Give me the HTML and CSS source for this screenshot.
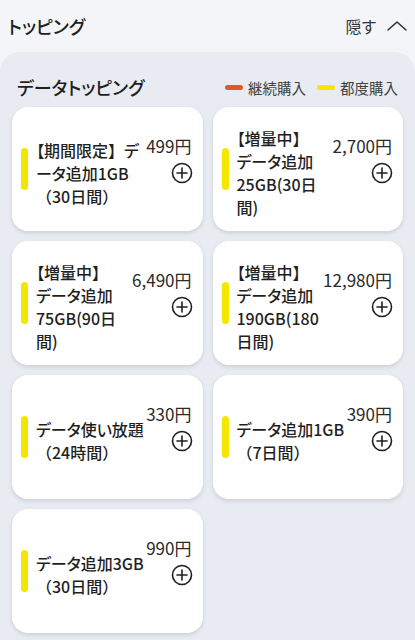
FILE: index.html
```html
<!DOCTYPE html>
<html lang="ja">

<head>
    <meta charset="utf-8" />
    <meta name="viewport" content="width=device-width, initial-scale=1" />
    <title>トッピング</title>
    <link rel="stylesheet" href="styles.css">
</head>

<body>
    <header class="top">
        <h1 class="top-title">トッピング</h1>
        <button class="toggle">
            隠す
            <svg width="22" height="12" viewBox="0 0 22 12" fill="none" stroke="currentColor" stroke-width="1.6"
                stroke-linecap="round" stroke-linejoin="round">
                <polyline points="2 10 11 2 20 10" />
            </svg>
        </button>
    </header>

    <section class="panel">
        <div class="panel-head">
            <h2 class="panel-title">データトッピング</h2>
            <ul class="legend">
                <li><span class="swatch swatch-cont"></span>継続購入</li>
                <li><span class="swatch swatch-once"></span>都度購入</li>
            </ul>
        </div>

        <div class="grid">
            <div class="card">
                <span class="bar"></span>
                <p class="name">【期間限定<span class="fw">】</span>デ<br />ータ追加1GB<br /><span class="fw">（30日間）</span></p>
                <div class="side">
                    <span class="price">499円</span>
                    <svg class="add" width="22" height="22" viewBox="0 0 22 22" fill="none" stroke="currentColor" stroke-width="1.6" stroke-linecap="round">
                        <circle cx="11" cy="11" r="9.5" />
                        <line x1="11" y1="6" x2="11" y2="16" />
                        <line x1="6" y1="11" x2="16" y2="11" />
                    </svg>
                </div>
            </div>

            <div class="card">
                <span class="bar"></span>
                <p class="name">【増量中<span class="fw">】</span><br />データ追加<br />25GB(30日<br />間)</p>
                <div class="side">
                    <span class="price">2,700円</span>
                    <svg class="add" width="22" height="22" viewBox="0 0 22 22" fill="none" stroke="currentColor" stroke-width="1.6" stroke-linecap="round">
                        <circle cx="11" cy="11" r="9.5" />
                        <line x1="11" y1="6" x2="11" y2="16" />
                        <line x1="6" y1="11" x2="16" y2="11" />
                    </svg>
                </div>
            </div>

            <div class="card">
                <span class="bar"></span>
                <p class="name">【増量中<span class="fw">】</span><br />データ追加<br />75GB(90日<br />間)</p>
                <div class="side">
                    <span class="price">6,490円</span>
                    <svg class="add" width="22" height="22" viewBox="0 0 22 22" fill="none" stroke="currentColor" stroke-width="1.6" stroke-linecap="round">
                        <circle cx="11" cy="11" r="9.5" />
                        <line x1="11" y1="6" x2="11" y2="16" />
                        <line x1="6" y1="11" x2="16" y2="11" />
                    </svg>
                </div>
            </div>

            <div class="card">
                <span class="bar"></span>
                <p class="name">【増量中<span class="fw">】</span><br />データ追加<br />190GB(180<br />日間)</p>
                <div class="side">
                    <span class="price">12,980円</span>
                    <svg class="add" width="22" height="22" viewBox="0 0 22 22" fill="none" stroke="currentColor" stroke-width="1.6" stroke-linecap="round">
                        <circle cx="11" cy="11" r="9.5" />
                        <line x1="11" y1="6" x2="11" y2="16" />
                        <line x1="6" y1="11" x2="16" y2="11" />
                    </svg>
                </div>
            </div>

            <div class="card">
                <span class="bar"></span>
                <p class="name">データ使い放題<br /><span class="fw">（24時間）</span></p>
                <div class="side">
                    <span class="price">330円</span>
                    <svg class="add" width="22" height="22" viewBox="0 0 22 22" fill="none" stroke="currentColor" stroke-width="1.6" stroke-linecap="round">
                        <circle cx="11" cy="11" r="9.5" />
                        <line x1="11" y1="6" x2="11" y2="16" />
                        <line x1="6" y1="11" x2="16" y2="11" />
                    </svg>
                </div>
            </div>

            <div class="card">
                <span class="bar"></span>
                <p class="name">データ追加1GB<br /><span class="fw">（7日間）</span></p>
                <div class="side">
                    <span class="price">390円</span>
                    <svg class="add" width="22" height="22" viewBox="0 0 22 22" fill="none" stroke="currentColor" stroke-width="1.6" stroke-linecap="round">
                        <circle cx="11" cy="11" r="9.5" />
                        <line x1="11" y1="6" x2="11" y2="16" />
                        <line x1="6" y1="11" x2="16" y2="11" />
                    </svg>
                </div>
            </div>

            <div class="card">
                <span class="bar"></span>
                <p class="name">データ追加3GB<br /><span class="fw">（30日間）</span></p>
                <div class="side">
                    <span class="price">990円</span>
                    <svg class="add" width="22" height="22" viewBox="0 0 22 22" fill="none" stroke="currentColor" stroke-width="1.6" stroke-linecap="round">
                        <circle cx="11" cy="11" r="9.5" />
                        <line x1="11" y1="6" x2="11" y2="16" />
                        <line x1="6" y1="11" x2="16" y2="11" />
                    </svg>
                </div>
            </div>
        </div>
    </section>
</body>

</html>
```

FILE: styles.css
```css
:root {
    --bg: #f3f5f9;
    --panel: #e8ecf2;
    --text: #1f1f1f;
    --muted: #404040;
    --continuous: #e2591f;
    --one-time: #f5e600;
}

* {
    box-sizing: border-box;
}

body {
    margin: 0;
    background: var(--bg);
    color: var(--text);
    font-family: "Noto Sans CJK JP", "Noto Sans", sans-serif;
    font-feature-settings: "palt";
}

.top {
    display: flex;
    align-items: center;
    justify-content: space-between;
    height: 52px;
    padding: 0 7px 0 8px;
}

.top-title {
    margin: 0;
    font-size: 18px;
    font-weight: 500;
}

.toggle {
    display: flex;
    align-items: center;
    gap: 10px;
    padding: 0;
    border: none;
    background: none;
    color: #333;
    font: inherit;
    font-size: 16px;
}

.panel {
    background: var(--panel);
    border-radius: 20px 20px 0 0;
    padding: 22px 12px 12px;
}

.panel-head {
    display: flex;
    align-items: center;
    justify-content: space-between;
    height: 26px;
    padding: 0 5px;
    margin-bottom: 7px;
}

.panel-title {
    margin: 0;
    font-size: 18px;
    font-weight: 500;
}

.legend {
    display: flex;
    gap: 11px;
    margin: 0;
    padding: 0;
    list-style: none;
    font-size: 14.5px;
    color: var(--muted);
}

.legend li {
    display: flex;
    align-items: center;
    gap: 5px;
}

.swatch {
    width: 18px;
    height: 5px;
    border-radius: 3px;
}

.swatch-cont {
    background: var(--continuous);
}

.swatch-once {
    background: var(--one-time);
}

.grid {
    display: grid;
    grid-template-columns: 1fr 1fr;
    gap: 10px;
}

.card {
    display: flex;
    align-items: center;
    height: 124px;
    padding: 0 11px 0 9px;
    background: #fff;
    border-radius: 16px;
    box-shadow: 0 2px 4px rgba(0, 0, 0, 0.12);
}

.bar {
    flex: none;
    width: 7px;
    height: 42px;
    border-radius: 4px;
    background: var(--one-time);
    margin-right: 8px;
}

.name {
    flex: 1;
    min-width: 0;
    margin: 8px 0 0;
    font-size: 16px;
    font-weight: 500;
    line-height: 23px;
    white-space: nowrap;
}

/* closing brackets and parentheses keep their full width, as in the app */
.fw {
    font-feature-settings: normal;
}

.side {
    flex: none;
    display: flex;
    flex-direction: column;
    align-items: flex-end;
    gap: 6px;
    margin-bottom: 20px;
}

.price {
    font-size: 17px;
    line-height: 21px;
    color: #2a2a2a;
}

.add {
    display: block;
    margin-right: -1px;
}
```
